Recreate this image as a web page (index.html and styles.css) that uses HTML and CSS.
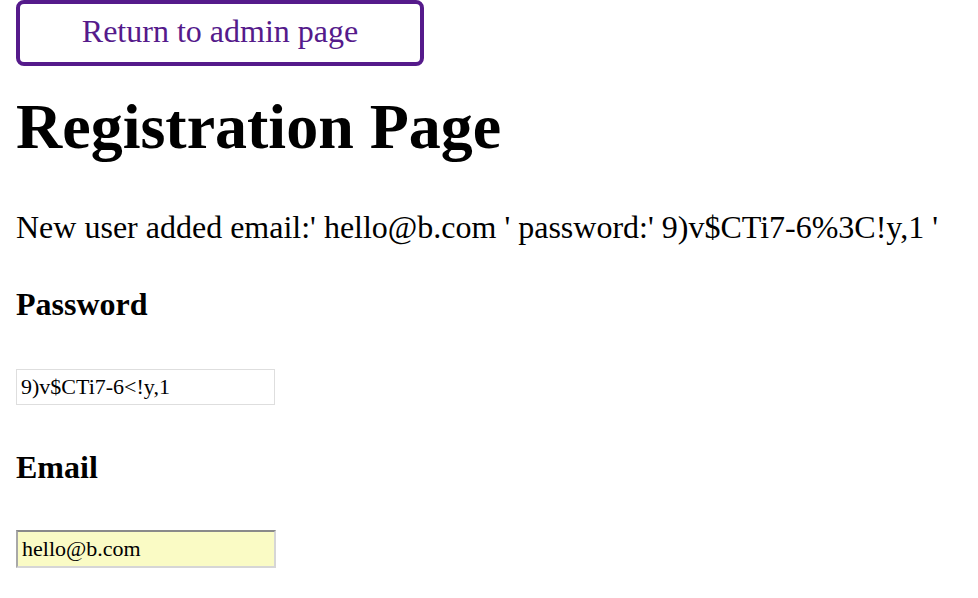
FILE: index.html
```html
<!DOCTYPE html>
<html>
<head>
<meta charset="utf-8">
<link rel="stylesheet" href="styles.css">
</head>
<body>
<a class="btn" href="#">Return to admin page</a>
<h1 class="title">Registration Page</h1>
<p class="msg">New user added email:' hello@b.com ' password:' 9)v$CTi7-6%3C!y,1 '</p>
<h4 class="label label-pw">Password</h4>
<input class="field field-pw" type="text" value="9)v$CTi7-6&lt;!y,1">
<h4 class="label label-email">Email</h4>
<input class="field field-email" type="text" value="hello@b.com">
</body>
</html>
```
FILE: styles.css
```css
html, body {
  margin: 0;
  padding: 0;
  background: #fff;
}
body {
  padding: 0 16px;
  font-family: "Liberation Serif", "Times New Roman", serif;
  color: #000;
}
.btn {
  display: block;
  box-sizing: border-box;
  width: 408px;
  height: 66px;
  padding-bottom: 4px;
  border: 4px solid #551a8b;
  border-radius: 8px;
  text-align: center;
  font-size: 32px;
  line-height: 54px;
  color: #551a8b;
  text-decoration: none;
}
.title {
  margin: 24px 0 0;
  font-size: 64px;
  line-height: 74px;
  font-weight: bold;
}
.msg {
  margin: 45px 0 0;
  font-size: 32px;
  line-height: 37px;
}
.label {
  font-size: 32px;
  line-height: 37px;
  font-weight: bold;
  margin: 0;
}
.label-pw { margin-top: 40px; }
.label-email { margin-top: 44px; }
.field {
  display: block;
  box-sizing: border-box;
  margin: 0;
  padding: 0 4px;
  font-family: "Liberation Serif", "Times New Roman", serif;
  font-size: 22px;
  color: #000;
  outline: none;
}
.field-pw {
  margin-top: 46px;
  width: 259px;
  height: 36px;
  border: 1px solid #dedede;
  background: #fff;
}
.field-email {
  margin-top: 44px;
  width: 260px;
  height: 38px;
  border-style: solid;
  border-width: 2px;
  border-color: #8a8a8a #d6d6d6 #d6d6d6 #a8a8a8;
  background: #fafbc5;
}
```
